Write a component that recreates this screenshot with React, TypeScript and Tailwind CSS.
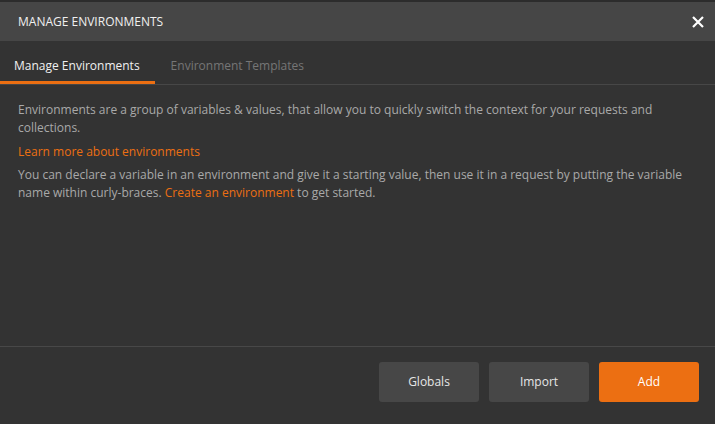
export default function App() {
  return (
    <div
      className="flex h-[424px] w-[715px] flex-col bg-[#333333] text-[12px] text-[#a9a9a9]"
      style={{ fontFamily: '"Open Sans", sans-serif' }}
    >
      <header className="flex h-[41px] items-center justify-between border-t-2 border-[#2c2c2c] bg-[#464646] pl-[18px] pr-[11px]">
        <h1 className="text-[12px] text-[#f0f0f0]">MANAGE ENVIRONMENTS</h1>
        <button className="flex h-3 w-3 items-center justify-center text-white">
          <svg width="12" height="12" viewBox="0 0 12 12" fill="none" stroke="currentColor" strokeWidth="2.2">
            <path d="M1 1L11 11M11 1L1 11" />
          </svg>
        </button>
      </header>

      <nav className="flex h-[44px] items-stretch border-b border-[#474747]">
        <div className="flex items-center border-b-[3px] border-[#ec6f12] pl-[14px] pr-[15px] pt-[9px] text-[#f0f0f0]">
          Manage Environments
        </div>
        <div className="flex items-center px-[16px] pb-[3px] pt-[9px] text-[#767676]">Environment Templates</div>
      </nav>

      <main className="flex-1 px-[18px] pt-[16px] leading-[18px]">
        <p>
          Environments are a group of variables &amp; values, that allow you to quickly switch the context for your
          requests and collections.
        </p>
        <a className="mt-[6px] block text-[#ec6f12]">Learn more about environments</a>
        <p className="mt-[5px]">
          You can declare a variable in an environment and give it a starting value, then use it in a request by
          putting the variable name within curly-braces. <a className="text-[#ec6f12]">Create an environment</a> to
          get started.
        </p>
      </main>

      <footer className="flex h-[78px] items-start justify-end gap-[10px] border-t border-[#484848] pr-[16px] pt-[15px]">
        <button className="h-10 w-[100px] rounded-[3px] bg-[#474747] text-[#e6e6e6]">Globals</button>
        <button className="h-10 w-[100px] rounded-[3px] bg-[#474747] text-[#e6e6e6]">Import</button>
        <button className="h-10 w-[100px] rounded-[3px] bg-[#ec6f12] text-white">Add</button>
      </footer>
    </div>
  )
}
